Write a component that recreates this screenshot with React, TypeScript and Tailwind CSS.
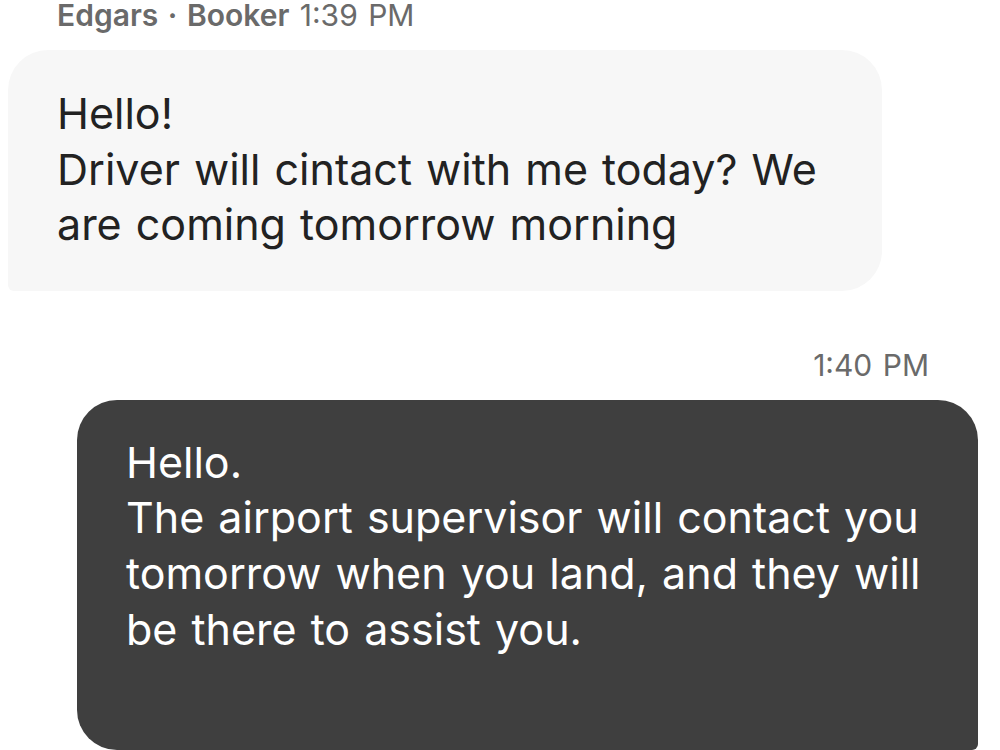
import React from 'react'

type Msg = {
  lines: string[]
}

const incoming: Msg = {
  lines: ['Hello!', 'Driver will cintact with me today? We', 'are coming tomorrow morning'],
}

const outgoing: Msg = {
  lines: [
    'Hello.',
    'The airport supervisor will contact you',
    'tomorrow when you land, and they will',
    'be there to assist you.',
  ],
}

function Lines({ lines }: { lines: string[] }) {
  return (
    <>
      {lines.map((l, i) => (
        <div key={i} className="whitespace-nowrap">{l}</div>
      ))}
    </>
  )
}

export default function App() {
  return (
    <div className="w-[1000px] h-[750px] overflow-hidden bg-white font-['Inter',sans-serif]">
      <div className="pl-[57px] text-[30px] leading-[30px] text-[#6a6a6a] [word-spacing:2px]">
        <span className="font-semibold">Edgars · Booker</span> 1:39 PM
      </div>

      <div className="mt-[20px] ml-[8px] w-[874px] rounded-[40px] rounded-bl-[6px] bg-[#f7f7f7] pl-[49px] pt-[36px] pb-[38px] text-[43px] leading-[55.6px] text-[#222222] [word-spacing:2px]">
        <Lines lines={incoming.lines} />
      </div>

      <div className="mt-[57px] pr-[71px] text-right text-[30px] leading-[34px] text-[#6a6a6a] [word-spacing:2px]">1:40 PM</div>

      <div className="mt-[18px] ml-[77px] w-[901px] h-[350px] rounded-[40px] rounded-br-[6px] bg-[#3f3f3f] pl-[49px] pt-[35px] text-[43px] leading-[55.6px] text-white [word-spacing:2px]">
        <Lines lines={outgoing.lines} />
      </div>
    </div>
  )
}
